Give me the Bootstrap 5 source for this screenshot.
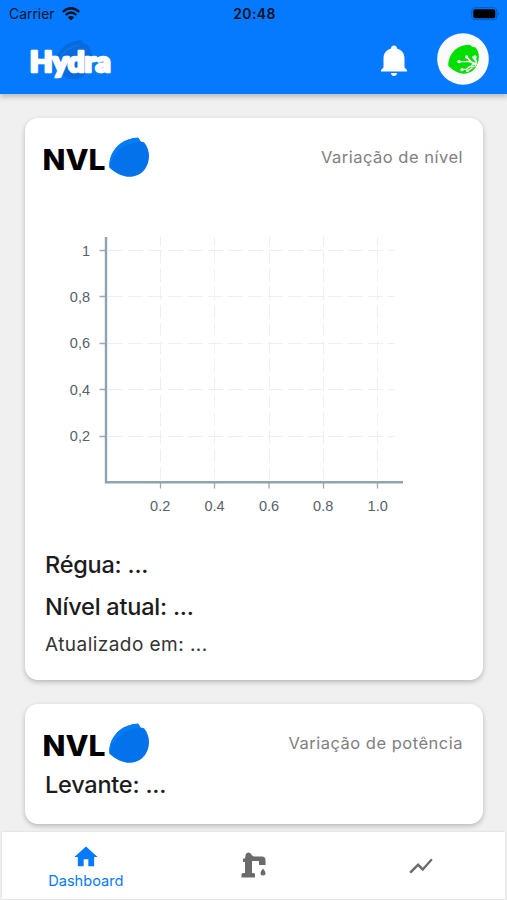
<!DOCTYPE html>
<html lang="pt-BR">
<head>
<meta charset="utf-8">
<meta name="viewport" content="width=device-width, initial-scale=1">
<title>Hydra</title>
<link href="https://cdn.jsdelivr.net/npm/bootstrap@5.3.0/dist/css/bootstrap.min.css" rel="stylesheet">
<style>
body{font-family:Inter,"Liberation Sans",sans-serif;background:#f0f0f0;height:900px;overflow:hidden;color:#1c1c1c}
svg{display:block;flex:none}
.app-header{height:94px;background:#067aff;box-shadow:0 3px 5px rgba(0,0,0,.22);z-index:2}
.status{height:28px;font-size:13.9px;line-height:28px;color:#06152b;padding:0 7px 0 9px}
.status-side{flex:1 1 0}
.clock{font-weight:600;letter-spacing:.4px;color:#051022}
.app-bar{height:66px;padding:0 18px 0 28px}
.avatar{margin:-4px 0 0 29px}
.panel{border:0;border-radius:13px;box-shadow:0 2px 5px rgba(0,0,0,.24)}
.panel-level{height:562px}
.panel-power{height:120px}
.panel-head{height:59px;padding:19px 20px 0 19px}
.caption{font-size:16.5px;line-height:40px;letter-spacing:.5px;color:#808080}
.reading{font-size:23.5px;line-height:30px;font-weight:450;letter-spacing:-.23px;padding-left:20px}
.stamp{font-size:19px;line-height:26px;letter-spacing:.45px;color:#333;padding-left:20px}
.tabs{height:67px;background:#fff;margin:0 2px 1px;box-shadow:0 0 2px rgba(0,0,0,.12);z-index:2}
.tabs a{flex:1 1 0;color:#6b6b6b}
.tabs a.current{color:#067aff;font-size:14.6px;line-height:20px}
.feed{padding:24px 24px 0 25px;gap:24px;height:738px}
</style>
<script src="https://cdn.jsdelivr.net/npm/bootstrap@5.3.0/dist/js/bootstrap.bundle.min.js"></script>
</head>
<body class="d-flex flex-column">
<svg width="0" height="0" class="position-absolute" aria-hidden="true">
  <symbol id="petal" viewBox="0 0 120 120">
    <path fill="#0472ea" d="M87 0L95 12L105 14C115 26 120 40 120 55C120 90 97 118 62 118C40 118 18 106 1 90C0 60 12 38 30 22C46 8 66 2 87 0Z"/>
    <path fill="#077cf8" d="M87 0L95 12C60 15 30 30 12 60L1 90C0 60 12 38 30 22C46 8 66 2 87 0Z"/>
  </symbol>
</svg>

<header class="app-header position-relative flex-shrink-0">
  <div class="status d-flex align-items-center">
    <div class="status-side d-flex align-items-center">
      <span>Carrier</span>
      <svg style="margin-left:7px" width="18" height="14" viewBox="0 0 18 14" fill="none" stroke="#051022" stroke-width="2.3"><path d="M.8 5Q9-2.500 17.200 5M3.700 8Q9 3 14.300 8"/><path fill="#051022" stroke="none" d="M5.800 10.300Q9 7.800 12.200 10.300L9 13.600Z"/></svg>
    </div>
    <span class="clock">20:48</span>
    <div class="status-side d-flex justify-content-end">
      <svg width="30" height="14" viewBox="0 0 30 14"><rect x="1.800" y=".800" width="25" height="12" rx="3.500" fill="none" stroke="#0459bb" stroke-width="1.100"/><rect x="3.300" y="2.300" width="22" height="9" rx="2" fill="#000"/><path d="M28 5Q30 7 28 9Z" fill="#0459bb"/></svg>
    </div>
  </div>
  <div class="app-bar d-flex align-items-center">
    <svg width="86" height="46" viewBox="0 0 86 46">
      <g transform="translate(26 2) scale(.317)"><path fill="#056bdf" d="M86 0L95 13L105 14C115 26 120 40 120 55C120 90 95 124 62 124C40 124 20 108 1 90C0 60 12 38 30 22C46 8 66 2 86 0Z"/><path fill="none" stroke="#1a76e0" stroke-width="4" d="M12 70Q30 25 80 16"/></g>
      <text x="1.800" y="33.500" textLength="81" lengthAdjust="spacingAndGlyphs" font-family="Lato,sans-serif" font-weight="900" font-size="27.500" fill="#fff" stroke="#fff" stroke-width="2.600" stroke-linejoin="round">Hydra</text>
    </svg>
    <svg class="ms-auto" width="28" height="34" viewBox="0 0 28 34" fill="#fff"><path d="M14 1.500C15.700 1.500 17 2.700 17 4.500C22 6 24.500 9.500 24.500 14.500V23.500L27 26V27.500H1V26L3.500 23.500V14.500C3.500 9.500 6 6 11 4.500C11 2.700 12.300 1.500 14 1.500ZM11 29H17C17 33 11 33 11 29Z"/></svg>
    <svg class="avatar" width="52" height="52" viewBox="5 10 156 156">
      <circle cx="83" cy="88" r="77.500" fill="#fafafa"/>
      <path fill="#00e000" d="M104 45L111 52L120 53C130 64 133 78 129 94C125 117 107 132 85 132C68 131 52 122 39 109C38 92 45 73 61 59C73 49 88 45 104 45Z"/>
      <g stroke="#fafafa" stroke-width="4" fill="none" stroke-linecap="round"><path d="M71 96H92Q101 93 110 97L126 104M94 82L108 96M119 82L124 99L108 108M101 96Q116 99 124 112M80 119H94L102 111H116M98 123L110 115M112 82L122 96"/></g>
      <g fill="#fafafa"><circle cx="71" cy="96" r="5"/><circle cx="94" cy="82" r="5"/><circle cx="119" cy="82" r="5"/><circle cx="80" cy="120" r="5"/><circle cx="96" cy="124" r="4"/></g>
    </svg>
  </div>
</header>

<main class="feed d-flex flex-column flex-shrink-0">
  <section class="card panel panel-level flex-shrink-0">
    <div class="panel-head d-flex justify-content-between">
      <svg width="107" height="42" viewBox="0 0 107 42"><text x="-1.500" y="33" textLength="63" lengthAdjust="spacingAndGlyphs" font-family="Inter,sans-serif" font-weight="800" font-size="28" fill="#000">NVL</text><use href="#petal" x="65" y=".500" width="40" height="40"/></svg>
      <span class="caption">Variação de nível</span>
    </div>
    <svg width="458" height="370" viewBox="25 177 458 370">
      <path fill="none" stroke="#efefef" stroke-dasharray="15 5" d="M108 250.500H395M108 296.500H395M108 343.500H395M108 389.500H395M108 436.500H395"/>
      <path fill="none" stroke="#efefef" stroke-dasharray="13 5" d="M160.500 480V237M214.500 480V237M269.500 480V237M323.500 480V237M377.500 480V237"/>
      <path fill="none" stroke="#9aabb6" stroke-width="1.300" d="M99.500 250.500H106M99.500 296.500H106M99.500 343.500H106M99.500 389.500H106M99.500 436.500H106M160.500 482V488.500M214.500 482V488.500M269 482V488.500M323.500 482V488.500M377.500 482V488.500"/>
      <path fill="none" stroke="#90a4ae" stroke-width="2.400" d="M106 237V482.300H403"/>
      <g font-family="Liberation Sans,Arial,sans-serif" font-size="14.500" fill="#566268">
        <g text-anchor="end"><text x="90" y="255.500">1</text><text x="90" y="301.700">0,8</text><text x="90" y="348.300">0,6</text><text x="90" y="394.700">0,4</text><text x="90" y="441.300">0,2</text></g>
        <g text-anchor="middle"><text x="160.200" y="511">0.2</text><text x="214.500" y="511">0.4</text><text x="269" y="511">0.6</text><text x="323.200" y="511">0.8</text><text x="377.700" y="511">1.0</text></g>
      </g>
    </svg>
    <div class="reading" style="margin-top:3px"><span>Régua: ...</span></div>
    <div class="reading" style="margin-top:12px"><span>Nível atual: ...</span></div>
    <div class="stamp" style="margin-top:10px"><span>Atualizado em: ...</span></div>
  </section>
  <section class="card panel panel-power flex-shrink-0">
    <div class="panel-head d-flex justify-content-between">
      <svg width="107" height="42" viewBox="0 0 107 42"><text x="-1.500" y="33" textLength="63" lengthAdjust="spacingAndGlyphs" font-family="Inter,sans-serif" font-weight="800" font-size="28" fill="#000">NVL</text><use href="#petal" x="65" y=".500" width="40" height="40"/></svg>
      <span class="caption">Variação de potência</span>
    </div>
    <div class="reading" style="margin-top:7px"><span>Levante: ...</span></div>
  </section>
</main>

<nav class="tabs d-flex position-relative flex-shrink-0">
  <a class="current d-flex flex-column align-items-center text-decoration-none" href="#">
    <svg style="margin-top:11px" width="28" height="28" viewBox="0 0 24 24" fill="currentColor"><path d="M10 20v-6h4v6h5v-8h3L12 3 2 12h3v8z"/></svg>
    <span>Dashboard</span>
  </a>
  <a class="d-flex align-items-center justify-content-center" href="#" aria-label="Bomba">
    <svg width="26" height="27" viewBox="0 0 26 27" fill="currentColor"><path d="M4.500 3.500Q4.500 1 7.500 .500Q10.500 1 11 3.500L13 4.500H21Q24.500 4.500 24.500 8V13H18V9H11V21H12.500Q14 21 14 22.500V25.500H.500V22.500Q.500 21 2 21H4V10H2V6.500H4Z"/><path d="M22 16.500Q24.500 19.500 24.500 21A2.500 2.500 0 0 1 19.500 21Q19.500 19.500 22 16.500Z"/></svg>
  </a>
  <a class="d-flex align-items-center justify-content-center" href="#" aria-label="Gráfico">
    <svg width="28" height="28" viewBox="0 0 24 24" fill="currentColor"><path d="M3.500 18.490l6-6.010 4 4L22 6.920l-1.410-1.410-7.090 7.970-4-4L2 16.990z"/></svg>
  </a>
</nav>
</body>
</html>
